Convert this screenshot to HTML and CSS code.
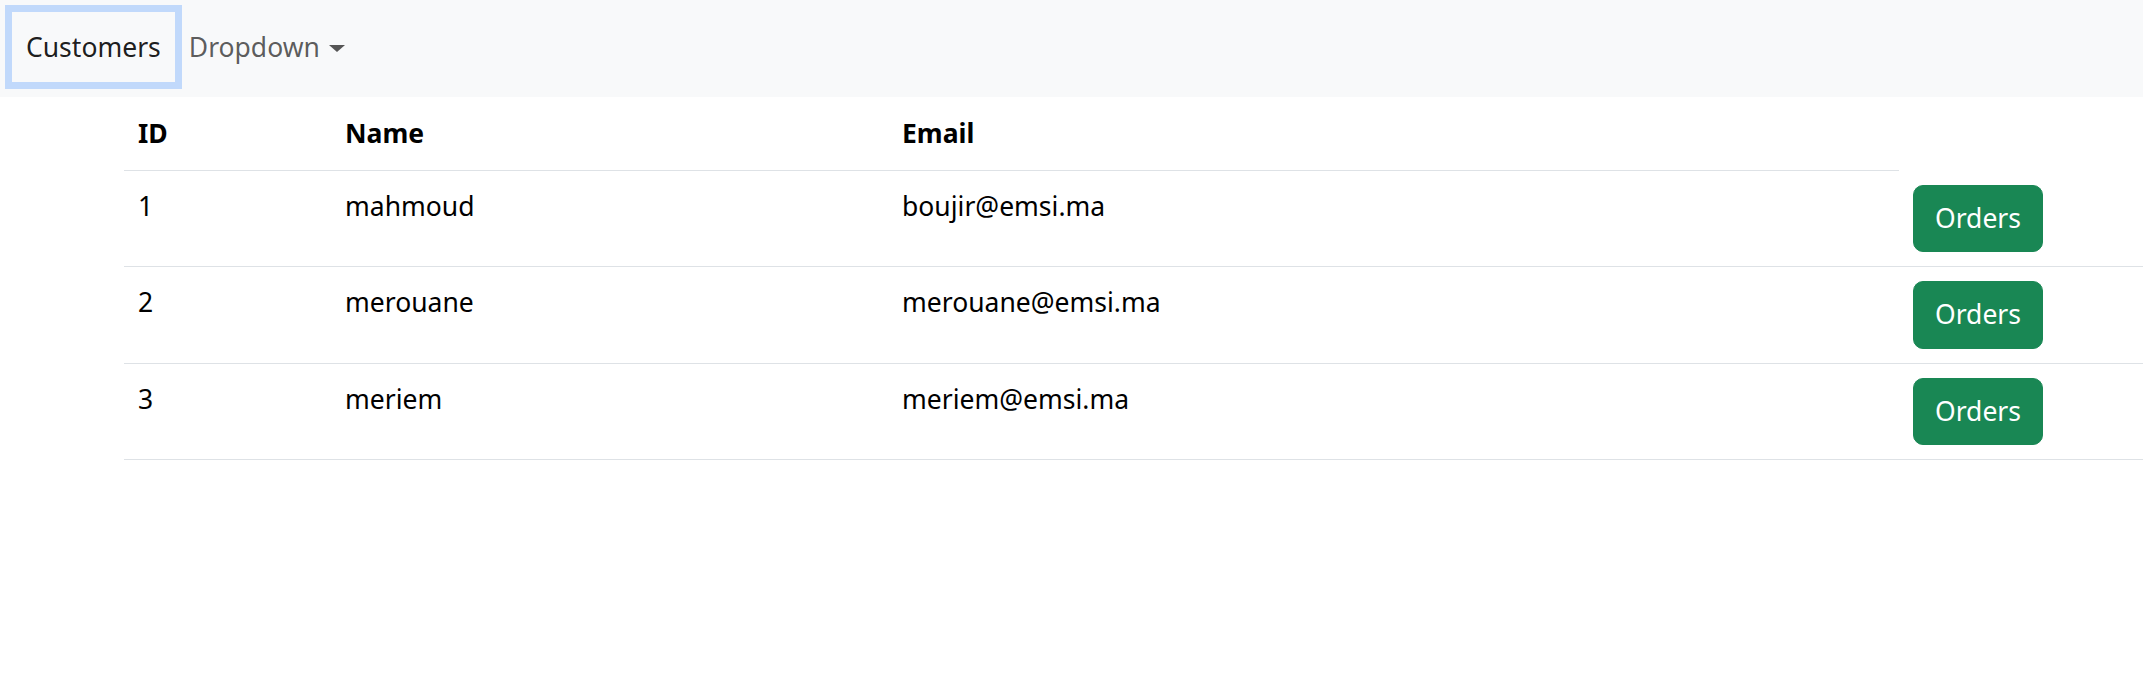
FILE: index.html
```html
<!DOCTYPE html>
<html lang="en">
<head>
<meta charset="utf-8">
<title>Customers</title>
<link rel="stylesheet" href="styles.css">
</head>
<body>
<nav class="navbar">
  <a class="nav-link active focused" href="#">Customers</a>
  <a class="nav-link dropdown-toggle" href="#">Dropdown<span class="caret"></span></a>
</nav>
<div class="content">
  <table class="table">
    <colgroup>
      <col class="c-id">
      <col class="c-name">
      <col class="c-email">
      <col class="c-action">
    </colgroup>
    <thead>
      <tr><th>ID</th><th>Name</th><th>Email</th></tr>
    </thead>
    <tbody>
      <tr><td>1</td><td>mahmoud</td><td>boujir@emsi.ma</td><td><button class="btn-success">Orders</button></td></tr>
      <tr><td>2</td><td>merouane</td><td>merouane@emsi.ma</td><td><button class="btn-success">Orders</button></td></tr>
      <tr><td>3</td><td>meriem</td><td>meriem@emsi.ma</td><td><button class="btn-success">Orders</button></td></tr>
    </tbody>
  </table>
</div>
</body>
</html>
```
FILE: styles.css
```css
html, body {
  margin: 0;
  padding: 0;
  background: #ffffff;
  overflow: hidden;
}
body {
  font-family: "Noto Sans", "Open Sans", sans-serif;
  font-size: 26.5px;
  line-height: 43px;
  color: #212529;
}
.navbar {
  display: flex;
  align-items: flex-start;
  height: 97px;
  box-sizing: border-box;
  padding: 12px 0 0 12px;
  background: #f8f9fa;
}
.nav-link {
  display: flex;
  align-items: center;
  height: 70px;
  box-sizing: border-box;
  padding: 0 14px;
  text-decoration: none;
  color: rgba(0, 0, 0, 0.65);
}
.nav-link.active {
  color: rgba(0, 0, 0, 0.9);
}
.nav-link.focused {
  box-shadow: 0 0 0 7px #c1d9fb;
}
.caret {
  display: inline-block;
  width: 0;
  height: 0;
  margin-left: 9px;
  margin-top: 2px;
  border-top: 7px solid #555555;
  border-left: 8px solid transparent;
  border-right: 8px solid transparent;
}
.content {
  padding-left: 124px;
}
.table {
  width: 2019px;
  border-collapse: collapse;
  table-layout: fixed;
}
.c-id { width: 207px; }
.c-name { width: 557px; }
.c-email { width: 1011px; }
.c-action { width: 244px; }
.table th,
.table td {
  padding: 14px 14px;
  text-align: left;
  vertical-align: top;
  border-bottom: 1px solid #dee2e6;
  color: #000000;
}
.table th {
  font-weight: 700;
  padding-top: 15px;
  padding-bottom: 15px;
}
.btn-success {
  font-family: inherit;
  font-size: 26.5px;
  line-height: 43px;
  padding: 11.25px 21px;
  border: 1px solid #198754;
  border-radius: 10px;
  background: #198754;
  color: #ffffff;
  cursor: pointer;
}
```
